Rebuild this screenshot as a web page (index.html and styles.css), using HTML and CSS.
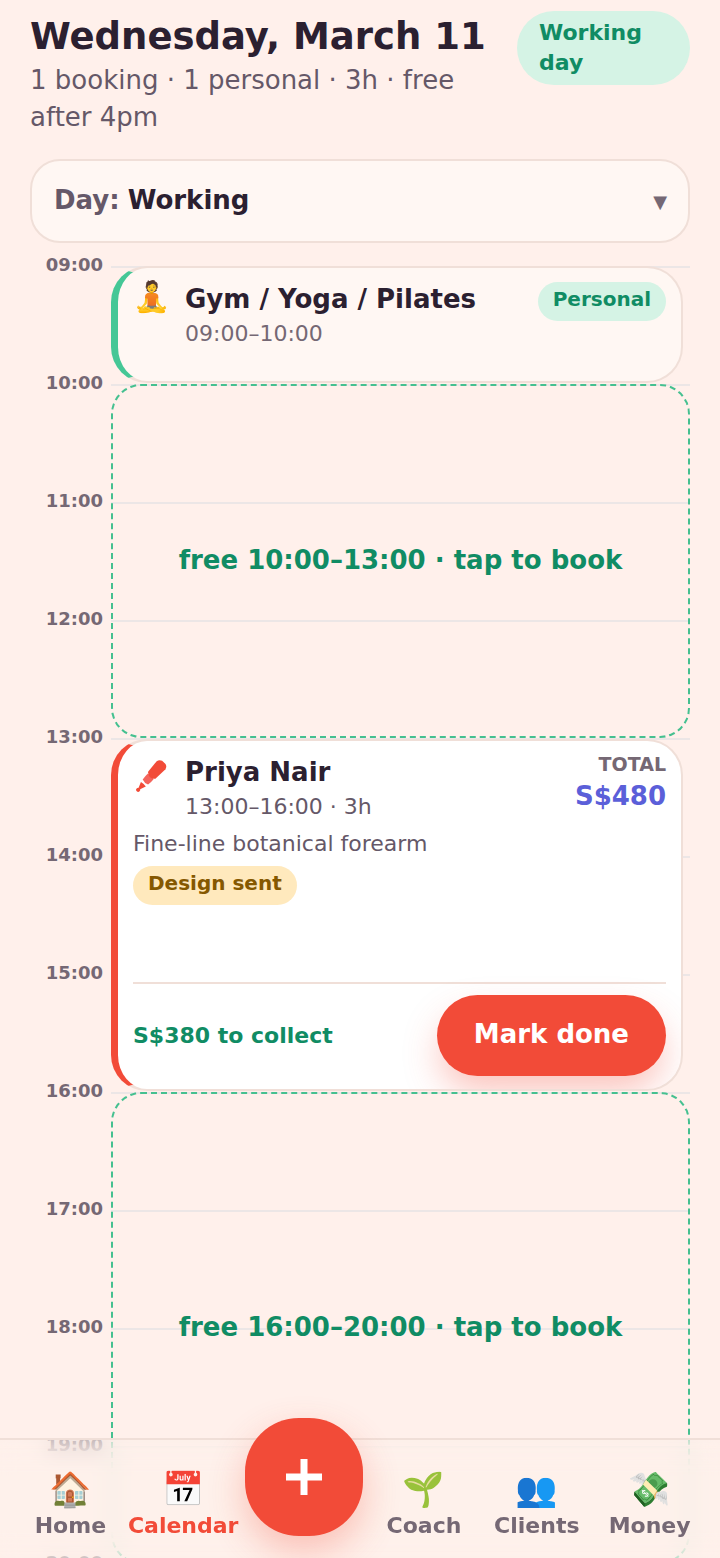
FILE: index.html
```html
<!DOCTYPE html>
<html lang="en">
<head>
<meta charset="utf-8">
<meta name="viewport" content="width=device-width, initial-scale=1">
<title>Calendar</title>
<link rel="stylesheet" href="styles.css">
</head>
<body>
<main class="page">
  <header class="header">
    <div class="heading">
      <h1 class="title">Wednesday, March 11</h1>
      <p class="summary">1 booking · 1 personal · 3h · free after 4pm</p>
    </div>
    <span class="day-badge">Working day</span>
  </header>

  <div class="day-picker">
    <label class="picker-label" for="day-type">Day:</label>
    <select class="picker-select" id="day-type">
      <option selected>Working</option>
      <option>Off</option>
    </select>
    <span class="picker-arrow" aria-hidden="true">▼</span>
  </div>

  <section class="timeline" aria-label="Schedule">
    <div class="hour r1"><time class="hour-label">09:00</time></div>
    <div class="hour r2"><time class="hour-label">10:00</time></div>
    <div class="hour r3"><time class="hour-label">11:00</time></div>
    <div class="hour r4"><time class="hour-label">12:00</time></div>
    <div class="hour r5"><time class="hour-label">13:00</time></div>
    <div class="hour r6"><time class="hour-label">14:00</time></div>
    <div class="hour r7"><time class="hour-label">15:00</time></div>
    <div class="hour r8"><time class="hour-label">16:00</time></div>
    <div class="hour r9"><time class="hour-label">17:00</time></div>
    <div class="hour r10"><time class="hour-label">18:00</time></div>
    <div class="hour r11"><time class="hour-label">19:00</time></div>
    <div class="hour r12"><time class="hour-label">20:00</time></div>

    <article class="card card-personal">
      <div class="card-head">
        <span class="card-icon" aria-hidden="true">🧘</span>
        <div class="card-info">
          <h2 class="card-title">Gym / Yoga / Pilates</h2>
          <p class="card-time">09:00–10:00</p>
        </div>
        <span class="pill pill-green">Personal</span>
      </div>
    </article>

    <button class="free free-morning" type="button">free 10:00–13:00 · tap to book</button>

    <article class="card card-booking">
      <div class="card-head">
        <span class="card-icon" aria-hidden="true">
          <svg class="machine" viewBox="0 0 96 96">
            <g transform="translate(8 91) rotate(-47)">
              <circle cx="2" cy="0" r="6" fill="#f24b38"/>
              <path d="M4 -2 L25 -10 Q28 0 25 10 L4 2 Z" fill="#f24b38"/>
              <path d="M34 -11 Q46 -13 58 -12 L58 12 Q46 13 34 11 Q29 0 34 -11 Z" fill="#f4645c"/>
              <path d="M62 -15 L103 -18 Q112 -16 115 -7 L115 7 Q112 16 103 18 L62 15 Q55 9 54 0 Q55 -9 62 -15 Z" fill="#f24b38"/>
            </g>
          </svg>
        </span>
        <div class="card-info">
          <h2 class="card-title">Priya Nair</h2>
          <p class="card-time">13:00–16:00 · 3h</p>
        </div>
        <div class="total">
          <span class="total-label">TOTAL</span>
          <span class="total-value">S$480</span>
        </div>
      </div>
      <p class="card-note">Fine-line botanical forearm</p>
      <span class="pill pill-amber">Design sent</span>
      <footer class="card-foot">
        <span class="collect">S$380 to collect</span>
        <button class="done" type="button">Mark done</button>
      </footer>
    </article>

    <button class="free free-evening" type="button">free 16:00–20:00 · tap to book</button>
  </section>
</main>

<nav class="tabs" aria-label="Main">
  <a class="tab" href="#home"><span class="tab-icon" aria-hidden="true">🏠</span>Home</a>
  <a class="tab tab-active" href="#calendar" aria-current="page"><span class="tab-icon" aria-hidden="true">📅</span>Calendar</a>
  <button class="add" type="button" aria-label="Add">
    <svg class="plus" viewBox="0 0 36 36" aria-hidden="true"><path d="M18 0V36M0 18H36" stroke="#fff" stroke-width="7"/></svg>
  </button>
  <a class="tab" href="#coach"><span class="tab-icon" aria-hidden="true">🌱</span>Coach</a>
  <a class="tab" href="#clients"><span class="tab-icon" aria-hidden="true">👥</span>Clients</a>
  <a class="tab" href="#money"><span class="tab-icon" aria-hidden="true">💸</span>Money</a>
</nav>
</body>
</html>
```
FILE: styles.css
```css
:root {
  --ink: #2b2030;
  --soft: #655868;
  --muted: #756874;
  --red: #f24b38;
  --green: #108c64;
  --mint: #d5f3e5;
  --line: #f0dfd8;
  --page: #fff0eb;
}

* { box-sizing: border-box; }

body {
  margin: 0;
  height: 100vh;
  overflow: hidden;
  background: var(--page);
  color: var(--ink);
  font-family: "DejaVu Sans", "Noto Color Emoji", sans-serif;
}

h1, h2, p { margin: 0; }

button, select { font: inherit; cursor: pointer; }

.page {
  height: 100%;
  padding: 11px 30px 0;
  overflow-y: auto;
  scrollbar-width: none;
}

.header {
  display: flex;
  align-items: flex-start;
  justify-content: space-between;
  gap: 30px;
}

.heading {
  flex: 1;
  min-width: 0;
}

.title {
  font-size: 37px;
  line-height: 51px;
  font-weight: 700;
  white-space: nowrap;
}

.summary {
  font-size: 26px;
  line-height: 37px;
  color: var(--soft);
}

.day-badge {
  flex: none;
  width: 173px;
  padding: 7px 22px;
  border-radius: 37px;
  background: var(--mint);
  color: var(--green);
  font-size: 22px;
  line-height: 30px;
  font-weight: 700;
}

.day-picker {
  display: flex;
  align-items: center;
  height: 84px;
  margin-top: 23px;
  padding: 0 21px 2px 22px;
  border: 2px solid var(--line);
  border-radius: 30px;
  background: #fff7f3;
  font-size: 26px;
  font-weight: 700;
}

.picker-label { color: var(--soft); }

.picker-select {
  flex: 1;
  margin-left: 4px;
  padding: 0 4px;
  border: 0;
  background: none;
  color: var(--ink);
  appearance: none;
}

.picker-arrow {
  padding-top: 2px;
  color: var(--muted);
  font-size: 18px;
  font-weight: 400;
}

.timeline {
  display: grid;
  grid-template-columns: 81px 1fr;
  grid-template-rows: repeat(12, 118px);
  margin-top: 23px;
}

.hour {
  grid-column: 1 / 3;
  display: grid;
  grid-template-columns: subgrid;
}

.hour::after {
  content: "";
  height: 2px;
  background: #ece6e6;
}

.hour-label {
  margin-top: -13px;
  padding-right: 8px;
  text-align: right;
  color: var(--muted);
  font-size: 18px;
  line-height: 24px;
  font-weight: 700;
}

.r1 { grid-row: 1; }
.r2 { grid-row: 2; }
.r3 { grid-row: 3; }
.r4 { grid-row: 4; }
.r5 { grid-row: 5; }
.r6 { grid-row: 6; }
.r7 { grid-row: 7; }
.r8 { grid-row: 8; }
.r9 { grid-row: 9; }
.r10 { grid-row: 10; }
.r11 { grid-row: 11; }
.r12 { grid-row: 12; }

.card {
  grid-column: 2;
  display: flex;
  flex-direction: column;
  margin: 0 7px 1px 0;
  padding: 14px 15px 13px;
  border: 2px solid var(--line);
  border-left-width: 7px;
  border-radius: 36px;
  overflow: hidden;
}

.card-personal {
  grid-row: 1 / 2;
  border-left-color: #45c796;
  background: #fff7f3;
}

.card-booking {
  grid-row: 5 / 8;
  margin-top: 1px;
  border-left-color: var(--red);
  background: #fff;
}

.card-head {
  display: flex;
  align-items: flex-start;
}

.card-icon {
  width: 52px;
  font-size: 30px;
  line-height: 30px;
}

.machine {
  display: block;
  width: 32px;
  height: 32px;
  margin: 5px 0 0 2px;
}

.card-info { flex: 1; }

.card-title {
  font-size: 26px;
  line-height: 34px;
  font-weight: 700;
}

.card-time {
  font-size: 22px;
  line-height: 36px;
  color: var(--muted);
}

.card-booking .card-time,
.card-note { color: var(--soft); }

.pill {
  padding: 3px 15px 8px;
  border-radius: 20px;
  font-size: 20px;
  line-height: 28px;
  font-weight: 700;
}

.pill-green {
  background: var(--mint);
  color: var(--green);
}

.pill-amber {
  align-self: flex-start;
  margin-top: 5px;
  background: #ffe9bd;
  color: #855800;
}

.total {
  display: flex;
  flex-direction: column;
  align-items: flex-end;
  font-weight: 700;
}

.total-label {
  color: var(--muted);
  font-size: 19px;
  line-height: 18px;
}

.total-value {
  color: #5b5fd9;
  font-size: 26px;
  line-height: 46px;
}

.card-note {
  margin-top: 2px;
  font-size: 22px;
  line-height: 34px;
}

.card-foot {
  display: flex;
  align-items: center;
  justify-content: space-between;
  margin-top: auto;
  padding-top: 11px;
  border-top: 2px solid var(--line);
}

.collect {
  color: var(--green);
  font-size: 22px;
  font-weight: 700;
}

.done {
  height: 81px;
  padding: 0 37px 3px;
  border: 0;
  border-radius: 41px;
  background: var(--red);
  box-shadow: 0 18px 36px -3px rgba(242, 75, 56, 0.34);
  color: #fff;
  font-size: 26px;
  font-weight: 700;
}

.free {
  grid-column: 2;
  padding: 0 0 3px;
  border: 2px dashed #45c090;
  border-radius: 30px;
  background: none;
  color: var(--green);
  font-size: 26px;
  font-weight: 700;
}

.free-morning { grid-row: 2 / 5; }
.free-evening { grid-row: 8 / 12; }

.tabs {
  position: fixed;
  inset: auto 0 0;
  display: grid;
  grid-template-columns: repeat(2, 1fr) 128px repeat(3, 1fr);
  height: 120px;
  padding: 0 14px;
  border-top: 2px solid #f0dfd8;
}

.tabs::before {
  content: "";
  position: absolute;
  inset: 0;
  z-index: -1;
  background: rgba(253, 241, 235, 0.65);
  backdrop-filter: blur(10px);
  mask-image: linear-gradient(rgba(0, 0, 0, 0.75), #000 36px, #000 90px, rgba(0, 0, 0, 0.75));
}

.tab {
  display: flex;
  flex-direction: column;
  align-items: center;
  padding-top: 26px;
  color: var(--muted);
  font-size: 22px;
  line-height: 28px;
  font-weight: 700;
  text-decoration: none;
}

.tab-active { color: var(--red); }

.tab-icon {
  font-size: 34px;
  line-height: 46px;
  font-weight: 400;
}

.add {
  display: grid;
  place-items: center;
  justify-self: center;
  width: 118px;
  height: 118px;
  margin-top: -22px;
  padding: 0;
  border: 0;
  border-radius: 54px;
  background: var(--red);
  box-shadow: 0 15px 36px rgba(242, 75, 56, 0.3);
}

.plus {
  width: 36px;
  height: 36px;
}
```
